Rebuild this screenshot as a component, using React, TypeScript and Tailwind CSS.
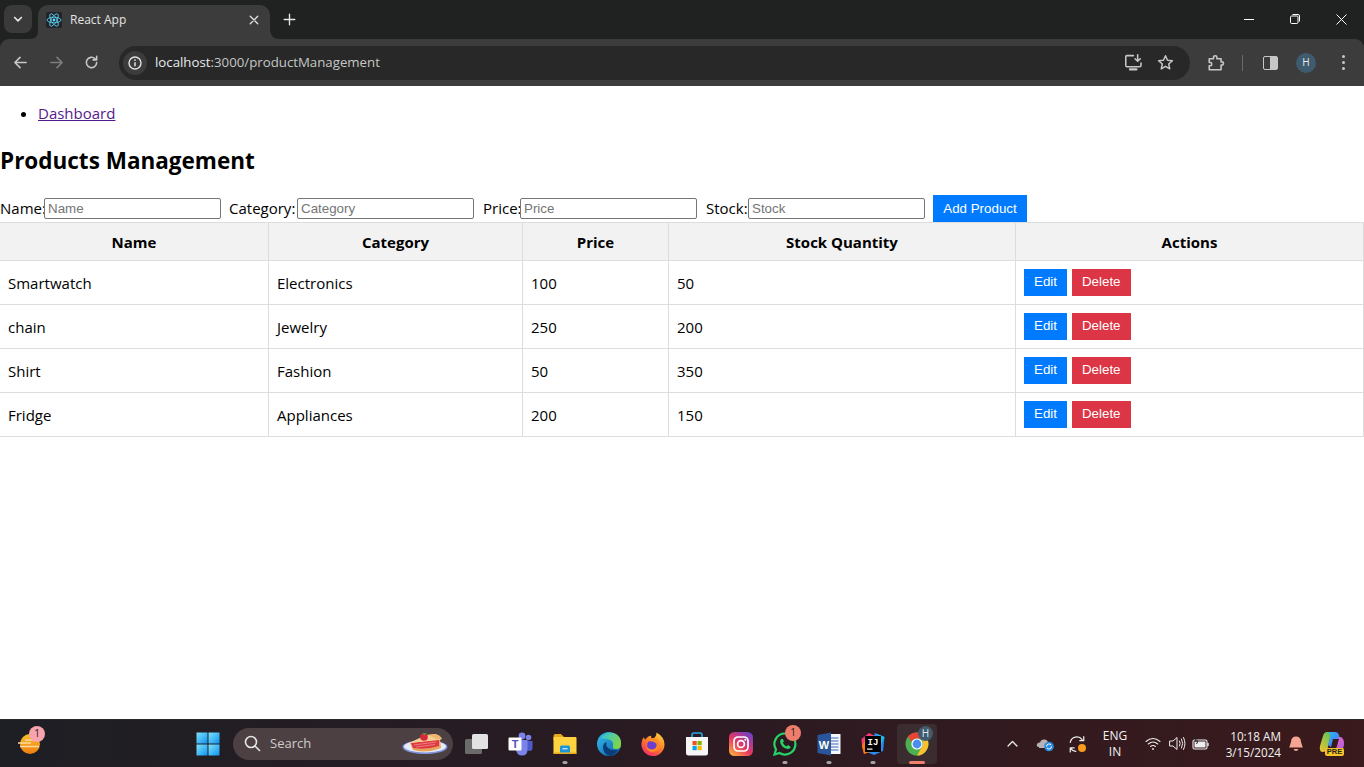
import React from "react";

const rows = [
  ["Smartwatch", "Electronics", "100", "50"],
  ["chain", "Jewelry", "250", "200"],
  ["Shirt", "Fashion", "50", "350"],
  ["Fridge", "Appliances", "200", "150"],
];

function ReactFavicon() {
  return (
    <svg width="16" height="16" viewBox="0 0 16 16" className="shrink-0">
      <rect width="16" height="16" rx="2" fill="#20232a" />
      <g fill="none" stroke="#61dafb" strokeWidth="0.8">
        <ellipse cx="8" cy="8" rx="7" ry="2.8" />
        <ellipse cx="8" cy="8" rx="7" ry="2.8" transform="rotate(60 8 8)" />
        <ellipse cx="8" cy="8" rx="7" ry="2.8" transform="rotate(120 8 8)" />
      </g>
      <circle cx="8" cy="8" r="1.4" fill="#61dafb" />
    </svg>
  );
}

function Stroke({ size = 16, children, color = "#c7c7c7", sw = 1.6 }: { size?: number; children: React.ReactNode; color?: string; sw?: number }) {
  return (
    <svg width={size} height={size} viewBox="0 0 16 16" fill="none" stroke={color} strokeWidth={sw} strokeLinecap="round" strokeLinejoin="round" className="shrink-0">
      {children}
    </svg>
  );
}

function TabStrip() {
  return (
    <div className="h-[39px] bg-[#202121] flex items-start pt-[5px] pl-[4px] shrink-0">
      <div className="w-[28px] h-[28px] rounded-[8px] bg-[#3a3a3a] flex items-center justify-center">
        <Stroke size={12} color="#e6e6e6" sw={2.2}><path d="M3.5 6 L8 10.5 L12.5 6" /></Stroke>
      </div>
      <div className="relative ml-[6px] w-[232px] h-[34px] bg-[#3c3c3c] rounded-t-[10px] flex items-center pl-[8px] pr-[11px] pb-[4px]">
        <ReactFavicon />
        <span className="ml-[8px] text-[12px] text-[#e3e3e3] flex-1 font-['Open_Sans',sans-serif]">React App</span>
        <Stroke size={10} color="#e3e3e3" sw={2}><path d="M2 2 L14 14 M14 2 L2 14" /></Stroke>
        <svg width="10" height="10" viewBox="0 0 10 10" className="absolute bottom-0 right-[-10px]"><path d="M0 0 Q0 10 10 10 L0 10Z" fill="#3c3c3c" /></svg>
        <svg width="8" height="8" viewBox="0 0 8 8" className="absolute bottom-0 left-[-8px]"><path d="M8 0 Q8 8 0 8 L8 8Z" fill="#3c3c3c" /></svg>
      </div>
      <div className="ml-[13px] mt-[8px]">
        <Stroke size={13} color="#e6e6e6" sw={1.7}><path d="M8 1.5 V14.5 M1.5 8 H14.5" /></Stroke>
      </div>
      <div className="ml-auto flex items-center h-[28px]">
        <div className="w-[46px] flex justify-center"><svg width="10" height="10" viewBox="0 0 10 10"><path d="M0 5.5H10" stroke="#fff" strokeWidth="1" /></svg></div>
        <div className="w-[46px] flex justify-center"><svg width="10" height="10" viewBox="0 0 10 10" fill="none" stroke="#fff" strokeWidth="1"><rect x="0.5" y="2" width="7.5" height="7.5" rx="1.2" /><path d="M2.5 0.5 H8 Q9.5 0.5 9.5 2 V7.5" /></svg></div>
        <div className="w-[46px] flex justify-center"><svg width="11" height="11" viewBox="0 0 11 11" stroke="#fff" strokeWidth="1"><path d="M0.5 0.5 L10.5 10.5 M10.5 0.5 L0.5 10.5" /></svg></div>
      </div>
    </div>
  );
}

function Toolbar() {
  return (
    <div className="h-[47px] bg-[#3c3c3c] rounded-t-[9px] flex items-center shrink-0 relative">
      <div className="w-[36px] ml-[2px] flex justify-center">
        <Stroke size={15} color="#c7c7c7" sw={1.7}><path d="M14 8 H2.5 M7.5 2.5 L2 8 L7.5 13.5" /></Stroke>
      </div>
      <div className="w-[36px] flex justify-center">
        <Stroke size={15} color="#7d7d7d" sw={1.7}><path d="M2 8 H13.5 M8.5 2.5 L14 8 L8.5 13.5" /></Stroke>
      </div>
      <div className="w-[34px] flex justify-center">
        <Stroke size={15} color="#c7c7c7" sw={1.7}><path d="M13.5 8 A5.5 5.5 0 1 1 11.8 4 M13.5 1.5 V5.2 H9.8" /></Stroke>
      </div>
      <div className="ml-[11px] w-[1071px] h-[34px] rounded-full bg-[#282828] flex items-center pl-[4px] pr-[16px]">
        <div className="w-[24px] h-[24px] rounded-full bg-[#3c3c3c] flex items-center justify-center">
          <svg width="14" height="14" viewBox="0 0 14 14" fill="none">
            <circle cx="7" cy="7" r="6" stroke="#e3e3e3" strokeWidth="1.4" />
            <path d="M7 6.2 V10.2" stroke="#e3e3e3" strokeWidth="1.5" />
            <circle cx="7" cy="4.1" r="0.9" fill="#e3e3e3" />
          </svg>
        </div>
        <span className="ml-[8px] text-[13.25px] font-['Open_Sans',sans-serif] text-[#c4c7c5] flex-1"><span className="text-[#e8eaed]">localhost</span>:3000/productManagement</span>
        <Stroke size={19} color="#c7c7c7" sw={1.3}>
          <path d="M8 2.2 H2.5 Q1.5 2.2 1.5 3.2 V10.5 Q1.5 11.5 2.5 11.5 H13.2 Q14.3 11.5 14.3 10.5 V8.5" />
          <path d="M5 13.8 H10.5" strokeWidth="1.8" />
          <path d="M11.5 1.5 V6.8 M9.3 4.8 L11.5 7 L13.7 4.8" />
        </Stroke>
        <div className="ml-[14px]">
          <Stroke size={17} color="#c7c7c7" sw={1.4}><path d="M8 1.6 L9.9 5.9 L14.5 6.3 L11 9.4 L12 14 L8 11.6 L4 14 L5 9.4 L1.5 6.3 L6.1 5.9 Z" /></Stroke>
        </div>
      </div>
      <div className="ml-[17px]">
        <Stroke size={18} color="#c7c7c7" sw={1.4}>
          <path d="M2 4.2 H5.8 V3 Q5.8 1.5 7.3 1.5 Q8.8 1.5 8.8 3 V4.2 H12.5 V7 H13.2 Q14.7 7 14.7 8.4 Q14.7 9.9 13.2 9.9 H12.5 V14 H2 V10.5 H3.2 Q4.2 10.5 4.2 9 Q4.2 7.5 3.2 7.5 H2 Z" />
        </Stroke>
      </div>
      <div className="ml-[17px] w-[1px] h-[16px] bg-[#6a6a6a]" />
      <div className="ml-[20px] w-[15px] h-[14px] rounded-[2px] border-[1.5px] border-[#c7c7c7] flex justify-end">
        <div className="w-[7px] bg-[#c7c7c7]" />
      </div>
      <div className="ml-[18px] w-[20px] h-[20px] rounded-full bg-[#3f5c6e] flex items-center justify-center text-[10px] text-[#e8eaed] font-['Open_Sans',sans-serif]">H</div>
      <div className="ml-[26px] flex flex-col gap-[3px]">
        <div className="w-[3px] h-[3px] rounded-full bg-[#c7c7c7]" />
        <div className="w-[3px] h-[3px] rounded-full bg-[#c7c7c7]" />
        <div className="w-[3px] h-[3px] rounded-full bg-[#c7c7c7]" />
      </div>
    </div>
  );
}

function Field({ label, width, gap }: { label: string; width: string; gap: string }) {
  return (
    <>
      <label className={`${width} shrink-0 whitespace-nowrap`}>{label}:</label>
      <input
        placeholder={label}
        readOnly
        className={`w-[177px] h-[21px] border border-[#767676] rounded-[2px] px-[2px] indent-[1px] text-[13.33px] font-['Liberation_Sans',Arial,sans-serif] placeholder:text-[#757575] bg-white ${gap}`}
      />
    </>
  );
}

const btn = "h-[27px] px-[10px] text-white text-[13.33px] font-['Liberation_Sans',Arial,sans-serif] flex items-center justify-center";

function Page() {
  return (
    <main className="flex-1 bg-white text-black text-[15px] font-['Open_Sans',sans-serif] overflow-hidden">
      <ul className="mt-[16px] pl-[38px] list-disc h-[22px] leading-[22px]">
        <li><a href="#" className="text-[#551a8b] underline">Dashboard</a></li>
      </ul>
      <h2 className="mt-[21px] h-[32px] leading-[32px] text-[22.5px] font-bold">Products Management</h2>
      <form className="mt-[18px] h-[27px] flex items-center">
        <Field label="Name" width="w-[44px]" gap="mr-[8px]" />
        <Field label="Category" width="w-[68px]" gap="mr-[9px]" />
        <Field label="Price" width="w-[37px]" gap="mr-[9px]" />
        <Field label="Stock" width="w-[42px]" gap="mr-[8px]" />
        <button type="button" className={`${btn} bg-[#007bff] w-[94px]`}>Add Product</button>
      </form>
      <table className="w-[1365px] ml-[-1px] border-collapse table-fixed">
        <colgroup>
          <col className="w-[269px]" />
          <col className="w-[254px]" />
          <col className="w-[146px]" />
          <col className="w-[347px]" />
          <col />
        </colgroup>
        <thead>
          <tr className="h-[38px] bg-[#f2f2f2]">
            {["Name", "Category", "Price", "Stock Quantity", "Actions"].map((h) => (
              <th key={h} className="border border-[#ddd] font-bold text-center p-0 pt-[2px]">{h}</th>
            ))}
          </tr>
        </thead>
        <tbody>
          {rows.map((r) => (
            <tr key={r[0]} className="h-[44px]">
              {r.map((c, i) => (
                <td key={i} className="border border-[#ddd] pl-[8px] pt-[2px]">{c}</td>
              ))}
              <td className="border border-[#ddd] pl-[8px] align-middle">
                <div className="flex gap-[5px] mt-[-1px]">
                  <button type="button" className={`${btn} bg-[#007bff]`}>Edit</button>
                  <button type="button" className={`${btn} bg-[#dc3545]`}>Delete</button>
                </div>
              </td>
            </tr>
          ))}
        </tbody>
      </table>
    </main>
  );
}

function Slot({ children, dot, active }: { children: React.ReactNode; dot?: boolean; active?: boolean }) {
  return (
    <div className="relative w-[44px] h-[40px] flex items-center justify-center shrink-0">
      {active && <div className="absolute inset-y-0 left-[2px] right-[2px] rounded-[4px] bg-[#3a2c2f]" />}
      <div className="relative flex">{children}</div>
      {dot && <div className="absolute bottom-[0px] left-1/2 -translate-x-1/2 w-[5px] h-[3px] rounded-full bg-[#a3a3a3]" />}
      {active && <div className="absolute bottom-[0px] left-1/2 -translate-x-1/2 w-[16px] h-[3px] rounded-full bg-[#f0806c]" />}
    </div>
  );
}

function Badge({ className, children }: { className: string; children: React.ReactNode }) {
  return (
    <div className={`absolute rounded-full flex items-center justify-center text-[10px] font-['Open_Sans',sans-serif] ${className}`}>{children}</div>
  );
}

function Windows() {
  return (
    <svg width="24" height="24" viewBox="0 0 24 24">
      <defs>
        <linearGradient id="win" x1="0" y1="0" x2="1" y2="1">
          <stop offset="0" stopColor="#7fe3fa" />
          <stop offset="1" stopColor="#0e93f0" />
        </linearGradient>
      </defs>
      <rect x="0.5" y="0.5" width="11" height="11" fill="url(#win)" />
      <rect x="12.5" y="0.5" width="11" height="11" fill="url(#win)" />
      <rect x="0.5" y="12.5" width="11" height="11" fill="url(#win)" />
      <rect x="12.5" y="12.5" width="11" height="11" fill="url(#win)" />
    </svg>
  );
}

function Pie() {
  return (
    <svg width="46" height="28" viewBox="0 0 46 28" className="shrink-0">
      <ellipse cx="23" cy="17" rx="22.5" ry="7" fill="#7f92dc" />
      <ellipse cx="23" cy="16.5" rx="21" ry="6" fill="#e6ebfa" />
      <path d="M8 13 L38 9 L39 18 Q24 24 11 20 Z" fill="#e8a55c" />
      <path d="M9 13 L37 9.5 L37 16 Q24 20 11 18 Z" fill="#dd3a44" />
      <path d="M12 15 L34 12 M14 17 L33 14.5" stroke="#f07a7c" strokeWidth="1" />
      <path d="M7 13 L24 5 L33 4 Q38 5 40 9 L37 10 Z" fill="#f5cf92" />
      <path d="M26 5 L33 4 Q38 5 40 9 L35 9 Z" fill="#eeb56e" />
      <circle cx="22" cy="7" r="3.8" fill="#d8263a" />
      <path d="M20 3.5 L25 3 L22.5 5.5 Z" fill="#4f9c3a" />
    </svg>
  );
}

function TaskView() {
  return (
    <svg width="26" height="24" viewBox="0 0 26 24">
      <rect x="1" y="7" width="17" height="15" rx="1.5" fill="#6b6b6b" />
      <rect x="8" y="2" width="16" height="15" rx="1.5" fill="#e2e2e2" />
    </svg>
  );
}

function Teams() {
  return (
    <svg width="26" height="26" viewBox="0 0 26 26">
      <circle cx="20.5" cy="6.5" r="2.8" fill="#7b83eb" />
      <circle cx="14" cy="5" r="3.4" fill="#7b83eb" />
      <path d="M17 10 H24.5 V17 Q24.5 20 21.5 20 Q19 20 18 18 Z" fill="#5059c9" />
      <path d="M8 9 H19.5 V19 Q19.5 24.5 14 24.5 Q9 24.5 8 19 Z" fill="#7b83eb" />
      <rect x="0.5" y="6.5" width="13" height="13" rx="1" fill="#fff" />
      <text x="7" y="17" textAnchor="middle" fontSize="11" fontWeight="700" fill="#4b53bc" fontFamily="Liberation Sans, sans-serif">T</text>
    </svg>
  );
}

function Folder() {
  return (
    <svg width="24" height="24" viewBox="0 0 24 24">
      <path d="M0.5 4 Q0.5 2 2.5 2 H8 L10.5 4.5 V8 H0.5 Z" fill="#e8a91a" />
      <rect x="0.5" y="5" width="23" height="17" rx="1" fill="#ffd23f" />
      <rect x="0.5" y="20.5" width="23" height="1.5" fill="#e8a91a" />
      <path d="M7 15 Q7 13.5 8.5 13.5 H15.5 Q17 13.5 17 15 V20.5 H7 Z" fill="#1c95d8" />
      <rect x="9.5" y="16" width="5" height="1.4" fill="#bfe4f5" />
    </svg>
  );
}

function Edge() {
  return (
    <svg width="24" height="24" viewBox="0 0 24 24">
      <defs>
        <linearGradient id="edgeA" x1="0" y1="0" x2="1" y2="1">
          <stop offset="0" stopColor="#35c1f1" />
          <stop offset="1" stopColor="#0c59a4" />
        </linearGradient>
        <linearGradient id="edgeB" x1="0" y1="0" x2="1" y2="0.6">
          <stop offset="0" stopColor="#2fc2e4" />
          <stop offset="1" stopColor="#7fd646" />
        </linearGradient>
      </defs>
      <circle cx="12" cy="12" r="12" fill="url(#edgeA)" />
      <path d="M4 6 Q10 -2 19 2 Q25 6 24 13 Q24 17 19 17 Q15 17 16 14 Q17 9 12 7.5 Q7 6.5 4 6Z" fill="url(#edgeB)" />
      <path d="M13 24 Q6 22 6 15 Q6 11 10 10 Q8 13 11 16 Q15 19 21 18 Q18 23 13 24Z" fill="#0a3d78" />
    </svg>
  );
}

function Firefox() {
  return (
    <svg width="24" height="24" viewBox="0 0 24 24">
      <defs>
        <linearGradient id="ff" x1="0.8" y1="0" x2="0.2" y2="1">
          <stop offset="0" stopColor="#ffd23a" />
          <stop offset="0.5" stopColor="#ff7a2c" />
          <stop offset="1" stopColor="#f0286a" />
        </linearGradient>
      </defs>
      <path d="M12 24 A11.5 11.5 0 0 1 0.7 10 Q1.3 6.5 3 5 Q3 7 4.5 7.5 Q6.5 4 10.5 3.8 Q9 6 12 6.5 Q15.5 5 15.5 0.5 Q23.5 5 23.5 12.5 A11.5 11.5 0 0 1 12 24Z" fill="url(#ff)" />
      <circle cx="12" cy="13" r="5.8" fill="#6d3fd0" />
      <path d="M5 9 Q9 5 14 6.5 Q18.5 8 18.5 13.5 Q18 19 12 20 Q6.5 20 5 15 Q9 18.5 13 17 Q16 15.5 15.5 12 Q14 9.5 11 9.5 Q8 9 5 9Z" fill="#ff8a24" />
    </svg>
  );
}

function Store() {
  return (
    <svg width="24" height="24" viewBox="0 0 24 24">
      <path d="M7 6 V3 Q7 1 9 1 H15 Q17 1 17 3 V6" fill="none" stroke="#29a8e8" strokeWidth="1.6" />
      <path d="M1 5 H23 V21 Q23 23.5 20.5 23.5 H3.5 Q1 23.5 1 21 Z" fill="#f6f6f6" />
      <rect x="7.5" y="9" width="4.2" height="4.2" fill="#f25022" />
      <rect x="12.5" y="9" width="4.2" height="4.2" fill="#7fba00" />
      <rect x="7.5" y="14" width="4.2" height="4.2" fill="#00a4ef" />
      <rect x="12.5" y="14" width="4.2" height="4.2" fill="#ffb900" />
    </svg>
  );
}

function Instagram() {
  return (
    <svg width="24" height="24" viewBox="0 0 24 24">
      <defs>
        <linearGradient id="ig" x1="0.1" y1="1" x2="0.9" y2="0">
          <stop offset="0" stopColor="#fdb43c" />
          <stop offset="0.45" stopColor="#e8375f" />
          <stop offset="1" stopColor="#6a3fd2" />
        </linearGradient>
      </defs>
      <rect width="24" height="24" rx="5.5" fill="url(#ig)" />
      <rect x="5" y="5" width="14" height="14" rx="4" fill="none" stroke="#fff" strokeWidth="1.7" />
      <circle cx="12" cy="12" r="3.4" fill="none" stroke="#fff" strokeWidth="1.7" />
      <circle cx="16.3" cy="7.7" r="1" fill="#fff" />
    </svg>
  );
}

function Whatsapp() {
  return (
    <svg width="24" height="24" viewBox="0 0 24 24">
      <path d="M12 1.5 A10.5 10.5 0 1 1 6.5 21 L1.5 22.5 L3 17.5 A10.5 10.5 0 0 1 12 1.5Z" fill="none" stroke="#25d366" strokeWidth="2.2" />
      <path d="M8 7 Q6.5 8.5 7.5 11.5 Q9.5 16 14.5 17 Q17 17.3 17.8 15 L15 13 L13.5 14.4 Q10.7 13 9.7 10.5 L11 9.2 L9.8 7 Z" fill="#25d366" />
    </svg>
  );
}

function Word() {
  return (
    <svg width="24" height="24" viewBox="0 0 24 24">
      <rect x="9" y="2" width="14.5" height="20" fill="#f4f6fb" />
      <path d="M11 6 H21.5 M11 9 H21.5 M11 12 H21.5 M11 15 H21.5 M11 18 H21.5" stroke="#3a6fb8" strokeWidth="1.1" />
      <path d="M0.5 3 L14 0.5 V23.5 L0.5 21 Z" fill="#2a5699" />
      <text x="7" y="16.5" textAnchor="middle" fontSize="11" fontWeight="700" fill="#fff" fontFamily="Liberation Sans, sans-serif">W</text>
    </svg>
  );
}

function Intellij() {
  return (
    <svg width="24" height="24" viewBox="0 0 24 24">
      <path d="M0.5 7 L8 1 L14 4 L3 22 L1 14Z" fill="#fc3a72" />
      <path d="M14 1 L23.5 5 L22 19 L13 23 L6 20Z" fill="#2d8bf0" />
      <path d="M1 14 L6 4 L9 20 L3 22Z" fill="#f97a12" />
      <path d="M16 2 L23.5 5 L20 12Z" fill="#12c2e9" />
      <rect x="4" y="4" width="16" height="16" fill="#000" />
      <text x="12" y="13" textAnchor="middle" fontSize="9" fontWeight="700" fill="#fff" fontFamily="Liberation Mono, monospace">IJ</text>
      <rect x="6" y="16.5" width="5.5" height="1.2" fill="#fff" />
    </svg>
  );
}

function Chrome() {
  return (
    <svg width="24" height="24" viewBox="0 0 24 24">
      <circle cx="12" cy="12" r="11.5" fill="#4caf50" />
      <path d="M12 0.5 A11.5 11.5 0 0 1 22 6.5 H12 A5.5 5.5 0 0 0 6.5 10 L3 4.5 A11.5 11.5 0 0 1 12 0.5Z" fill="#ea4335" />
      <path d="M22 6.5 A11.5 11.5 0 0 1 12 23.5 L16.8 15 A5.5 5.5 0 0 0 16.5 8 Z" fill="#fbc02d" />
      <circle cx="12" cy="12" r="5.6" fill="#fff" />
      <circle cx="12" cy="12" r="4.4" fill="#4a8ff0" />
    </svg>
  );
}

function Copilot() {
  return (
    <div className="relative w-[26px] h-[26px]">
      <svg width="26" height="24" viewBox="0 0 26 24">
        <defs>
          <linearGradient id="copA" x1="0" y1="0" x2="1" y2="1">
            <stop offset="0" stopColor="#2fb5f5" />
            <stop offset="1" stopColor="#4a6ff0" />
          </linearGradient>
          <linearGradient id="copB" x1="0" y1="0" x2="1" y2="1">
            <stop offset="0" stopColor="#f06ac0" />
            <stop offset="1" stopColor="#b05ae0" />
          </linearGradient>
          <linearGradient id="copC" x1="0" y1="1" x2="1" y2="0">
            <stop offset="0" stopColor="#f5c52a" />
            <stop offset="1" stopColor="#37c26a" />
          </linearGradient>
        </defs>
        <path d="M8 1 H16 Q13 1 11 8 L9 16 Q8 21 3 21 Q0 20 1 15 L4 5 Q5 1 8 1Z" fill="url(#copC)" />
        <path d="M9 1 H16 Q19 1 20 4 L21 8 H14 L12 16 L9 14 L11 7 Q12 2 9 1Z" fill="url(#copA)" />
        <path d="M19 6 H21 Q24 6 25 11 L25 14 Q24 20 20 20 H14 Q17 19 18 15 L20 8Z" fill="url(#copB)" />
      </svg>
      <div className="absolute left-[6px] top-[17px] w-[19px] h-[8px] bg-[#f7c325] rounded-[2px] text-[7.5px] leading-[8px] font-bold text-center text-[#222] font-['Liberation_Sans',sans-serif]">PRE</div>
    </div>
  );
}

function Taskbar() {
  return (
    <footer className="h-[48px] shrink-0 flex items-center bg-gradient-to-r from-[#1d1f24] via-[#2a1a22] to-[#3a1a1c] border-t border-[#2d2a2d] text-white font-['Open_Sans',sans-serif]">
      <div className="relative w-[44px] h-[40px] ml-[7px] flex items-center justify-center">
        <svg width="24" height="24" viewBox="0 0 24 24">
          <defs>
            <linearGradient id="sun" x1="0" y1="0" x2="0" y2="1">
              <stop offset="0" stopColor="#fbc02a" />
              <stop offset="1" stopColor="#ee7c12" />
            </linearGradient>
          </defs>
          <circle cx="13" cy="12" r="10" fill="url(#sun)" />
          <path d="M1 11 H14 M3 14.5 H22 M8 8 H20" stroke="#f9dc9e" strokeWidth="1.5" />
        </svg>
        <Badge className="left-[22px] top-[2px] w-[16px] h-[16px] bg-[#f8a3ad] text-[#222]">1</Badge>
      </div>
      <div className="ml-[135px]"><Slot><Windows /></Slot></div>
      <div className="ml-[3px] w-[220px] h-[32px] rounded-full bg-[#4c4043] flex items-center pl-[11px] pr-[5px] shrink-0">
        <svg width="17" height="17" viewBox="0 0 17 17" fill="none" stroke="#e5e5e5" strokeWidth="1.6" strokeLinecap="round"><circle cx="7" cy="7" r="5.5" /><path d="M11 11 L15.5 15.5" /></svg>
        <span className="ml-[9px] text-[13px] text-[#d0cccd] flex-1">Search</span>
        <Pie />
      </div>
      <div className="ml-[2px]"><Slot><TaskView /></Slot></div>
      <Slot><Teams /></Slot>
      <Slot dot><Folder /></Slot>
      <Slot><Edge /></Slot>
      <Slot><Firefox /></Slot>
      <Slot><Store /></Slot>
      <Slot><Instagram /></Slot>
      <Slot dot>
        <Whatsapp />
        <Badge className="left-[12px] top-[-7px] w-[16px] h-[16px] bg-[#ef7d6b] text-[#222]">1</Badge>
      </Slot>
      <Slot dot><Word /></Slot>
      <Slot dot><Intellij /></Slot>
      <Slot active>
        <Chrome />
        <Badge className="left-[13px] top-[-6px] w-[15px] h-[15px] bg-[#3f5c6e] text-[#e8eaed] text-[9px]">H</Badge>
      </Slot>

      <div className="ml-[66px] w-[14px] flex justify-center">
        <Stroke size={13} color="#eee" sw={1.6}><path d="M2.5 11 L8 5.5 L13.5 11" /></Stroke>
      </div>
      <div className="ml-[17px] w-[20px]">
        <svg width="20" height="16" viewBox="0 0 20 16">
          <path d="M3 11 Q0 11 1 8 Q2 6 4 6.5 Q5 3 9 3.5 Q12 4 12 7 H13 L12 12 H3Z" fill="#b8b2b4" />
          <circle cx="13" cy="10.5" r="4.8" fill="#2a8be0" />
          <path d="M10.5 10.5 A2.5 2.5 0 0 1 15 9 M15.5 10.5 A2.5 2.5 0 0 1 11 12" stroke="#fff" strokeWidth="1" fill="none" />
        </svg>
      </div>
      <div className="ml-[12px] relative w-[18px] h-[18px]">
        <Stroke size={18} color="#eee" sw={1.1}>
          <path d="M2 6.5 A6 6 0 0 1 12.5 4 M14 1.5 V5 H10.5" />
          <path d="M5.5 11.5 H2 V15 M2.2 11.5 A6 6 0 0 0 7 14.5" />
        </Stroke>
        <div className="absolute left-[10px] top-[9px] w-[8px] h-[8px] rounded-full bg-[#f79a1e]" />
      </div>
      <div className="ml-[13px] w-[32px] text-[12px] leading-[16px] text-center text-[#f2f2f2]">
        <div>ENG</div>
        <div>IN</div>
      </div>
      <div className="ml-[14px] w-[16px]">
        <svg width="16" height="14" viewBox="0 0 16 14" fill="none" stroke="#eee" strokeWidth="1.1" strokeLinecap="round">
          <path d="M1 4.5 Q8 -1.5 15 4.5 M3.3 7 Q8 3 12.7 7 M5.6 9.5 Q8 7.5 10.4 9.5" />
          <circle cx="8" cy="12" r="0.9" fill="#eee" stroke="none" />
        </svg>
      </div>
      <div className="ml-[8px] w-[17px]">
        <svg width="17" height="15" viewBox="0 0 17 15" fill="none" stroke="#eee" strokeWidth="1" strokeLinecap="round" strokeLinejoin="round">
          <path d="M1 5 H4 L8 1.5 V13.5 L4 10 H1 Z" />
          <path d="M10.5 5 Q12 7.5 10.5 10 M12.5 3 Q15 7.5 12.5 12 M14.5 1.5 Q17.5 7.5 14.5 13.5" />
        </svg>
      </div>
      <div className="ml-[6px] w-[17px]">
        <svg width="17" height="13" viewBox="0 0 17 13" fill="none" stroke="#eee" strokeWidth="1.1">
          <rect x="1" y="3" width="14" height="9" rx="1.5" />
          <rect x="2.5" y="4.5" width="11" height="6" fill="#eee" stroke="none" />
          <path d="M16 6 V9" strokeWidth="1.4" />
          <path d="M5 0.5 L3 4 H6 L4.5 7" stroke="#222" strokeWidth="1" />
        </svg>
      </div>
      <div className="ml-[2px] w-[70px] shrink-0 text-right text-[11.7px] leading-[16px] text-[#f2f2f2] whitespace-nowrap">
        <div>10:18 AM</div>
        <div>3/15/2024</div>
      </div>
      <div className="ml-[7px] w-[16px]">
        <svg width="16" height="17" viewBox="0 0 16 17">
          <path d="M8 1.5 Q12.8 1.5 13 7 L14.8 12.5 H1.2 L3 7 Q3.2 1.5 8 1.5Z" fill="#f5a594" />
          <path d="M5.5 14 H10.5 Q9.8 16 8 16 Q6.2 16 5.5 14Z" fill="#f5a594" />
        </svg>
      </div>
      <div className="ml-[15px]"><Copilot /></div>
    </footer>
  );
}

export default function App() {
  return (
    <div className="h-screen w-full flex flex-col overflow-hidden bg-white">
      <div className="bg-[#202121] shrink-0">
        <TabStrip />
        <Toolbar />
      </div>
      <Page />
      <Taskbar />
    </div>
  );
}
